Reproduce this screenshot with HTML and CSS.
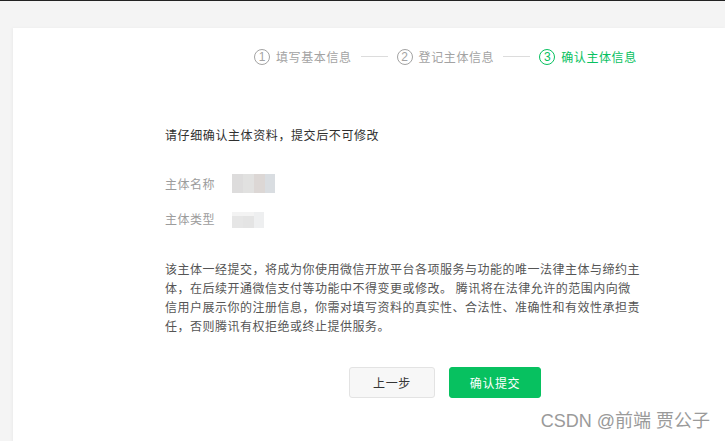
FILE: index.html
```html
<!DOCTYPE html>
<html lang="zh-CN">
<head>
    <meta charset="UTF-8">
    <title>确认主体信息</title>
    <link rel="stylesheet" href="styles.css">
</head>
<body>
    <div class="topbar"></div>
    <div class="page">
        <div class="card">
            <!-- steps -->
            <div class="steps">
                <div class="step">
                    <span class="step-num">1</span>
                    <span class="step-text">填写基本信息</span>
                </div>
                <span class="step-line"></span>
                <div class="step">
                    <span class="step-num">2</span>
                    <span class="step-text">登记主体信息</span>
                </div>
                <span class="step-line"></span>
                <div class="step step-active">
                    <span class="step-num">3</span>
                    <span class="step-text">确认主体信息</span>
                </div>
            </div>

            <div class="content">
                <h3 class="title">请仔细确认主体资料，提交后不可修改</h3>

                <div class="info-row">
                    <span class="info-label">主体名称</span>
                    <span class="mosaic mosaic-name"><i></i><i></i><i></i><i></i></span>
                </div>
                <div class="info-row info-row-type">
                    <span class="info-label">主体类型</span>
                    <span class="mosaic mosaic-type"><i></i><i></i><i></i></span>
                </div>

                <p class="notice">该主体一经提交，将成为你使用微信开放平台各项服务与功能的唯一法律主体与缔约主<br>体，在后续开通微信支付等功能中不得变更或修改。 腾讯将在法律允许的范围内向微<br>信用户展示你的注册信息，你需对填写资料的真实性、合法性、准确性和有效性承担责<br>任，否则腾讯有权拒绝或终止提供服务。</p>

                <div class="actions">
                    <button class="btn btn-default">上一步</button>
                    <button class="btn btn-primary">确认提交</button>
                </div>
            </div>
        </div>
    </div>

    <div class="watermark">CSDN @前端 贾公子</div>
</body>
</html>
```

FILE: styles.css
```css
* {
    margin: 0;
    padding: 0;
    box-sizing: border-box;
}

body {
    background: #f4f4f4;
    font-family: "Noto Sans CJK SC", "Noto Sans", sans-serif;
    font-size: 12px;
    letter-spacing: 0.5px;
    color: #353535;
    height: 441px;
    overflow: hidden;
}

.topbar {
    height: 1px;
    background: #222;
}

.page {
    padding: 27px 0 0 13px;
}

.card {
    background: #fff;
    min-height: 420px;
    box-shadow: -1px 0 3px rgba(0, 0, 0, 0.04);
    padding-top: 20px;
}

/* steps */
.steps {
    display: flex;
    align-items: center;
    padding-left: 241px;
    height: 17px;
}

.step {
    display: flex;
    align-items: center;
    color: #a3a3a3;
}

.step-num {
    width: 16px;
    height: 16px;
    border: 1px solid #a3a3a3;
    border-radius: 50%;
    display: flex;
    align-items: center;
    justify-content: center;
    font-family: "Liberation Sans", sans-serif;
    font-size: 12px;
    letter-spacing: 0;
    line-height: 1;
    margin-right: 6px;
}

.step-text {
    line-height: 17px;
    letter-spacing: 0.6px;
}

.step-active {
    color: #07c160;
}

    .step-active .step-num {
        border-color: #07c160;
    }

.step-line {
    width: 27px;
    height: 1px;
    background: #dcdcdc;
    margin: 0 9px;
}

/* content */
.content {
    padding-left: 152px;
}

.title {
    font-size: 12px;
    font-weight: normal;
    letter-spacing: 0.6px;
    color: #2f2f2f;
    line-height: 19px;
    margin-top: 60px;
}

.info-row {
    display: flex;
    align-items: center;
    height: 19px;
    margin-top: 30px;
}

.info-row-type {
    margin-top: 16px;
}

.info-label {
    width: 67px;
    color: #9c9c9c;
    line-height: 19px;
}

.mosaic {
    display: flex;
    height: 19px;
}

    .mosaic i {
        width: 11px;
        height: 100%;
    }

.mosaic-name i:nth-child(1) { background: #dddcdc; }
.mosaic-name i:nth-child(2) { background: #e1e1e0; }
.mosaic-name i:nth-child(3) { background: #dcd7d5; }
.mosaic-name i:nth-child(4) { background: #d9dde1; width: 10px; }

.mosaic-type {
    height: 16px;
    margin-top: 2px;
}

.mosaic-type i:nth-child(1) { background: linear-gradient(#f3f3f3 25%, #e6e6e6 25%); }
.mosaic-type i:nth-child(2) { background: linear-gradient(#f3f3f3 25%, #e4e4e4 25%); }
.mosaic-type i:nth-child(3) { background: #eeeff0; width: 10px; }

.notice {
    width: 520px;
    color: #555;
    line-height: 19px;
    margin-top: 31px;
}

/* buttons */
.actions {
    display: flex;
    margin: 32px 0 0 184px;
}

.btn {
    height: 31px;
    border-radius: 3px;
    font-family: inherit;
    font-size: 12px;
    letter-spacing: 0.6px;
    cursor: pointer;
}

.btn-default {
    width: 86px;
    background: #f7f7f7;
    border: 1px solid #e3e3e3;
    color: #353535;
}

.btn-primary {
    width: 92px;
    margin-left: 14px;
    background: #07c160;
    border: 1px solid #07c160;
    color: #fff;
}

.watermark {
    position: absolute;
    right: 15px;
    top: 410px;
    font-family: "Liberation Sans", "Noto Sans CJK SC", sans-serif;
    font-size: 18px;
    letter-spacing: 0;
    line-height: 22px;
    color: #9a9a9a;
    text-shadow: 0 0 2px #fff, 0 0 2px #fff;
}
```
